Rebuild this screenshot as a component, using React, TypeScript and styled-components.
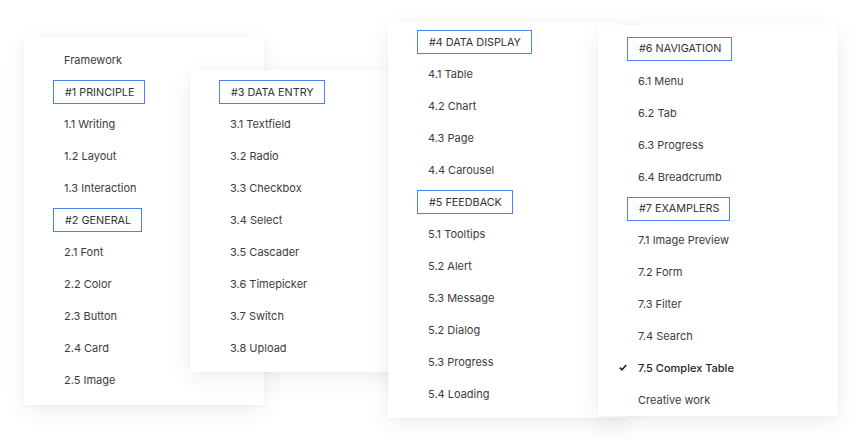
import React from "react";
import styled, { createGlobalStyle } from "styled-components";

const Global = createGlobalStyle`
  html, body { margin: 0; padding: 0; background: #ffffff; }
  body { font-family: Inter, "Noto Sans", sans-serif; }
`;

const Canvas = styled.div`
  position: relative;
  width: 862px;
  height: 445px;
  overflow: hidden;
  background: #ffffff;
`;

const Card = styled.div<{ $x: number; $y: number; $h: number; $pt: number }>`
  position: absolute;
  left: ${(p) => p.$x}px;
  top: ${(p) => p.$y}px;
  width: 240px;
  height: ${(p) => p.$h}px;
  box-sizing: border-box;
  padding: ${(p) => p.$pt}px 0 0 40px;
  background: #ffffff;
  box-shadow: 0 6px 22px rgba(0, 0, 0, 0.07), 0 1px 4px rgba(0, 0, 0, 0.03);
  display: flex;
  flex-direction: column;
`;

const Row = styled.div<{ $active?: boolean }>`
  position: relative;
  height: 32px;
  display: flex;
  align-items: center;
  font-size: 11px;
  color: ${(p) => (p.$active ? "#1f1f1f" : "#3c3c3c")};
  font-weight: ${(p) => (p.$active ? 500 : 400)};
  white-space: nowrap;
`;

const Section = styled.span`
  display: inline-flex;
  align-items: center;
  height: 24px;
  box-sizing: border-box;
  margin-left: -11px;
  padding: 0 10px 0 11px;
  border: 1px solid #4a82f0;
  font-size: 10.8px;
  color: #333333;
`;

const Check = styled.svg`
  position: absolute;
  left: -19px;
  top: 12px;
  width: 8px;
  height: 7px;
`;

type Item = { t: string; head?: boolean; active?: boolean };

const cards: { x: number; y: number; h: number; pt: number; items: Item[] }[] = [
  {
    x: 24,
    y: 37,
    h: 368,
    pt: 7,
    items: [
      { t: "Framework" },
      { t: "#1 PRINCIPLE", head: true },
      { t: "1.1 Writing" },
      { t: "1.2 Layout" },
      { t: "1.3 Interaction" },
      { t: "#2 GENERAL", head: true },
      { t: "2.1 Font" },
      { t: "2.2 Color" },
      { t: "2.3 Button" },
      { t: "2.4 Card" },
      { t: "2.5 Image" },
    ],
  },
  {
    x: 190,
    y: 70,
    h: 302,
    pt: 6,
    items: [
      { t: "#3 DATA ENTRY", head: true },
      { t: "3.1 Textfield" },
      { t: "3.2 Radio" },
      { t: "3.3 Checkbox" },
      { t: "3.4 Select" },
      { t: "3.5 Cascader" },
      { t: "3.6 Timepicker" },
      { t: "3.7 Switch" },
      { t: "3.8 Upload" },
    ],
  },
  {
    x: 388,
    y: 22,
    h: 396,
    pt: 4,
    items: [
      { t: "#4 DATA DISPLAY", head: true },
      { t: "4.1 Table" },
      { t: "4.2 Chart" },
      { t: "4.3 Page" },
      { t: "4.4 Carousel" },
      { t: "#5 FEEDBACK", head: true },
      { t: "5.1 Tooltips" },
      { t: "5.2 Alert" },
      { t: "5.3 Message" },
      { t: "5.2 Dialog" },
      { t: "5.3 Progress" },
      { t: "5.4 Loading" },
    ],
  },
  {
    x: 598,
    y: 25,
    h: 391,
    pt: 8,
    items: [
      { t: "#6 NAVIGATION", head: true },
      { t: "6.1 Menu" },
      { t: "6.2 Tab" },
      { t: "6.3 Progress" },
      { t: "6.4 Breadcrumb" },
      { t: "#7 EXAMPLERS", head: true },
      { t: "7.1 Image Preview" },
      { t: "7.2 Form" },
      { t: "7.3 Filter" },
      { t: "7.4 Search" },
      { t: "7.5 Complex Table", active: true },
      { t: "Creative work" },
    ],
  },
];

export default function App() {
  return (
    <>
      <Global />
      <Canvas>
        {cards.map((c, i) => (
          <Card key={i} $x={c.x} $y={c.y} $h={c.h} $pt={c.pt}>
            {c.items.map((it, j) => (
              <Row key={j} $active={it.active}>
                {it.active && (
                  <Check viewBox="0 0 8 7">
                    <path d="M0.8 3.6 L3 5.8 L7.2 1" fill="none" stroke="#1f1f1f" strokeWidth="1.5" />
                  </Check>
                )}
                {it.head ? <Section>{it.t}</Section> : it.t}
              </Row>
            ))}
          </Card>
        ))}
      </Canvas>
    </>
  );
}
